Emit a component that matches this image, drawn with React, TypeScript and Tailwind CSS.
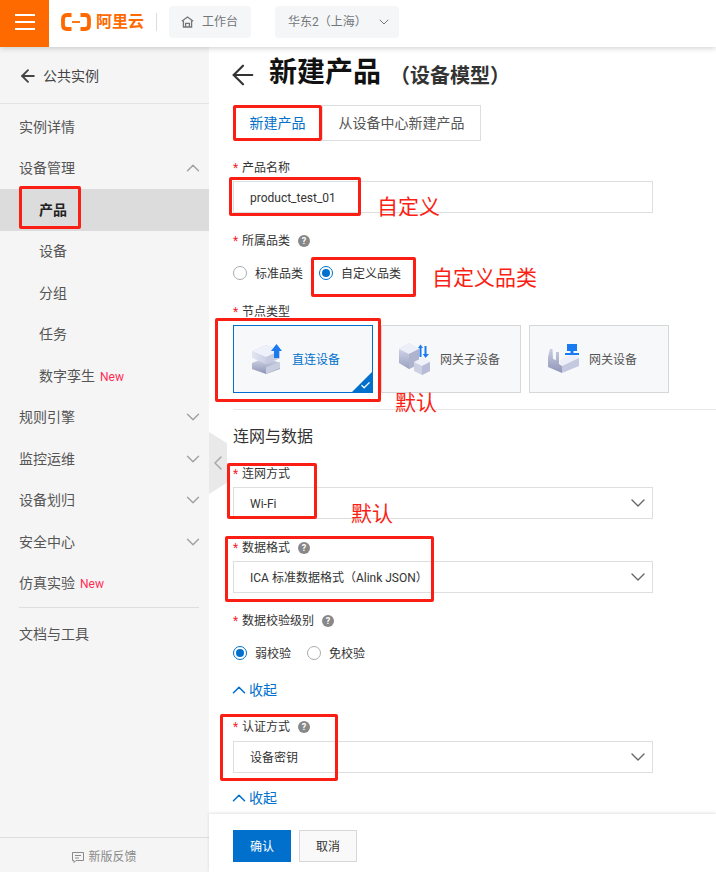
import React from 'react';
import { ArrowLeft, ChevronDown, ChevronLeft, ChevronUp, Check } from 'lucide-react';

const font = 'font-["Roboto","Noto_Sans_CJK_SC","Noto_Sans",sans-serif]';

const navItems = [
  { label: '实例详情', level: 0 },
  { label: '设备管理', level: 0, chevron: 'up' },
  { label: '产品', level: 1, active: true },
  { label: '设备', level: 1 },
  { label: '分组', level: 1 },
  { label: '任务', level: 1 },
  { label: '数字孪生', level: 1, isNew: true },
  { label: '规则引擎', level: 0, chevron: 'down' },
  { label: '监控运维', level: 0, chevron: 'down' },
  { label: '设备划归', level: 0, chevron: 'down' },
  { label: '安全中心', level: 0, chevron: 'down' },
  { label: '仿真实验', level: 0, isNew: true },
];

function Logo() {
  return (
    <svg width="30" height="18" viewBox="0 0 30 18" fill="none" stroke="#ff6a00" strokeWidth="3.8">
      <path d="M10.5 2H6Q2 2 2 6V12Q2 16 6 16H10.5" />
      <path d="M19.5 2H24Q28 2 28 6V12Q28 16 24 16H19.5" />
      <path d="M11 9H19" strokeWidth="1.8" />
    </svg>
  );
}

function HomeIcon() {
  return (
    <svg width="13" height="12" viewBox="0 0 13 12" fill="none" stroke="#73777a" strokeWidth="1.3">
      <path d="M0.8 5.2L6.5 1L12.2 5.2" />
      <path d="M2.4 4.6V11H10.6V4.6" />
      <path d="M4.6 11V7.4H8.4V11" />
    </svg>
  );
}

function Help() {
  return (
    <span className="flex h-3 w-3 items-center justify-center rounded-full bg-[#888888] text-[9px] leading-none font-bold text-white">
      ?
    </span>
  );
}

function Label({ text, help, className }: { text: string; help?: boolean; className: string }) {
  return (
    <div className={`flex h-4 items-center pt-[2px] text-xs leading-4 text-[#333333] ${className}`}>
      <span className="w-[9px] text-[#f5222d]">*</span>
      <span>{text}</span>
      {help && <span className="ml-2"><Help /></span>}
    </div>
  );
}

function Select({ value, className }: { value: string; className: string }) {
  return (
    <div className={`flex h-8 w-[420px] items-center justify-between border border-[#dcdee0] pr-[2px] pl-4 text-xs text-[#333333] ${className}`}>
      <span className="translate-y-px">{value}</span>
      <ChevronDown size={24} strokeWidth={1.4} className="text-[#666666]" />
    </div>
  );
}

function Radio({ label, checked }: { label: string; checked?: boolean }) {
  return (
    <div className="flex items-center gap-2 text-xs text-[#333333]">
      <span className={`flex h-3.5 w-3.5 items-center justify-center rounded-full border bg-white ${checked ? 'border-[#0070cc]' : 'border-[#a8acb0]'}`}>
        {checked && <span className="h-2 w-2 rounded-full bg-[#0070cc]" />}
      </span>
      <span className="translate-y-px">{label}</span>
    </div>
  );
}

function Collapse({ className }: { className: string }) {
  return (
    <div className={`flex h-4 items-center text-sm text-[#0070cc] ${className}`}>
      <ChevronUp size={22} strokeWidth={1.7} className="-mr-[1px] -ml-[5px]" />
      收起
    </div>
  );
}

function DirectIcon() {
  return (
    <svg width="30" height="30" viewBox="0 0 30 30" className="shrink-0">
      <defs>
        <linearGradient id="d1" x1="0" y1="0" x2="0" y2="1">
          <stop offset="0" stopColor="#d9dcec" />
          <stop offset="1" stopColor="#8d94b5" />
        </linearGradient>
        <linearGradient id="d2" x1="0" y1="0" x2="1" y2="0">
          <stop offset="0" stopColor="#e2e5f2" />
          <stop offset="1" stopColor="#b6bbd4" />
        </linearGradient>
      </defs>
      <path d="M0 19L14 13L28 19V25L14 30L0 25Z" fill="url(#d1)" />
      <path d="M14 23L28 18V24L14 30Z" fill="#c9cde0" />
      <path d="M0 7L14 1L28 7V14L14 20L0 14Z" fill="url(#d2)" />
      <path d="M0 7L14 1L28 7L14 13Z" fill="#eef0fa" />
      <path d="M14 13L28 7V14L14 20Z" fill="#c7cbe0" />
      <path d="M24.5 0L30 7H27V14H22V7H19Z" fill="#1a7af0" />
    </svg>
  );
}

function SubDeviceIcon() {
  return (
    <svg width="32" height="32" viewBox="0 0 32 32" className="shrink-0">
      <defs>
        <linearGradient id="s1" x1="0" y1="0" x2="0" y2="1">
          <stop offset="0" stopColor="#dfe2f2" />
          <stop offset="1" stopColor="#9aa0c0" />
        </linearGradient>
      </defs>
      <path d="M0 6L10 0L20 6V21L10 26L0 20Z" fill="url(#s1)" />
      <path d="M0 6L10 0L20 6L10 11Z" fill="#eceef8" />
      <path d="M10 11L20 6V21L10 26Z" fill="#aeb3ce" />
      <path d="M15 19L23 15L31 19V28L23 32L15 28Z" fill="#cdd1e4" />
      <path d="M15 19L23 15L31 19L23 23Z" fill="#f0f2fa" />
      <path d="M23 23L31 19V28L23 32Z" fill="#b8bcd6" />
      <path d="M19 5L21.5 1.5L24 5H22.5V14H20.5V5ZM25.5 3H27.5V11H30L26.5 15L23.8 11H25.5Z" fill="#1a7af0" />
    </svg>
  );
}

function GatewayIcon() {
  return (
    <svg width="32" height="30" viewBox="0 0 32 30" className="shrink-0">
      <defs>
        <linearGradient id="g1" x1="0" y1="0" x2="0" y2="1">
          <stop offset="0" stopColor="#c9cde2" />
          <stop offset="1" stopColor="#8f95b6" />
        </linearGradient>
      </defs>
      <path d="M2 5H4.5L5 15L8 16V8H11V20L14 22V29L0 23V13Z" fill="url(#g1)" />
      <path d="M11 17L25 9L31 14L14 22Z" fill="#eceef8" />
      <path d="M14 22L31 14V22L14 29Z" fill="#c5c9e0" />
      <path d="M19 0H29V7H25.5V9H31V11H17V9H22.5V7H19Z" fill="#1a7af0" />
    </svg>
  );
}

function NodeCard({ label, icon, gap, pad, selected }: { label: string; icon: React.ReactNode; gap: string; pad: string; selected?: boolean }) {
  return (
    <div className={`relative flex h-[68px] w-[140px] items-center overflow-hidden border bg-[#f7f8fa] text-xs ${selected ? 'border-[#0070cc] text-[#0070cc]' : 'border-[#d5d7d9] text-[#555555]'} ${gap} ${pad}`}>
      {icon}
      <span className="translate-y-px">{label}</span>
      {selected && (
        <span className="absolute right-0 bottom-0 h-5 w-5 bg-[#0070cc] [clip-path:polygon(100%_0,100%_100%,0_100%)]">
          <Check size={11} strokeWidth={2.6} className="absolute right-[1px] bottom-[1px] text-white" />
        </span>
      )}
    </div>
  );
}

function Sidebar() {
  return (
    <aside className="flex w-[209px] shrink-0 flex-col bg-[#f5f5f5]">
      <div className="flex h-[57px] shrink-0 items-center gap-[5px] border-b border-[#e3e3e3] pt-[1px] pl-[18px] text-sm text-[#444444]">
        <ArrowLeft size={20} strokeWidth={2.2} />
        公共实例
      </div>
      <div className="flex-1 pt-[2px]">
        {navItems.map((item) => (
          <div
            key={item.label}
            className={`flex h-[41.5px] items-center justify-between pr-[5px] text-sm ${item.level ? 'pl-[39px]' : 'pl-[19px]'} ${item.active ? 'bg-[#dcdcdc] font-bold text-[#222222]' : 'text-[#555555]'}`}
          >
            <span className="flex items-center gap-[5px]">
              {item.label}
              {item.isNew && <span className="translate-y-px text-xs text-[#ff2d55]">New</span>}
            </span>
            {item.chevron === 'up' && <ChevronUp size={22} strokeWidth={1.5} className="text-[#a0a0a0]" />}
            {item.chevron === 'down' && <ChevronDown size={22} strokeWidth={1.5} className="text-[#a0a0a0]" />}
          </div>
        ))}
        <div className="mx-[19px] mt-[3px] mr-[10px] border-t border-[#dedede]" />
        <div className="flex h-[52px] items-center pl-[19px] text-sm text-[#555555]">文档与工具</div>
      </div>
      <div className="flex h-[35px] shrink-0 items-center justify-center gap-1 border-t border-[#dedede] pt-1 text-xs text-[#8a8a8a]">
        <svg width="12" height="11" viewBox="0 0 12 11" fill="none" stroke="#8a8a8a">
          <path d="M0.5 0.5H11.5V8.5H4L2 10.5V8.5H0.5Z" />
          <path d="M3 3.5H9M3 6H7" />
        </svg>
        新版反馈
      </div>
    </aside>
  );
}

function Header() {
  return (
    <header className="relative z-10 flex h-[47px] shrink-0 items-center bg-white pr-4 pb-[3px] shadow-[0_1px_6px_rgba(0,0,0,0.2)]">
      <div className="-mb-[3px] flex h-[47px] w-[49px] flex-col items-center justify-center gap-[5px] bg-[#ff6a00] pb-[3px]">
        <span className="h-[2px] w-5 bg-white" />
        <span className="h-[2px] w-5 bg-white" />
        <span className="h-[2px] w-5 bg-white" />
      </div>
      <div className="ml-3 flex items-center gap-[5px]">
        <Logo />
        <span className="text-base leading-none font-bold text-[#ff6a00]">阿里云</span>
      </div>
      <div className="mr-3 ml-3 h-[18px] w-px bg-[#dcdcdc]" />
      <div className="flex h-8 w-[82px] items-center gap-2 rounded-sm bg-[#f5f6f7] pl-3 text-xs text-[#73777a]">
        <HomeIcon />
        工作台
      </div>
      <div className="ml-6 flex h-8 w-[124px] items-center gap-[9px] rounded-sm bg-[#f5f6f7] pl-[13px] text-xs text-[#73777a]">
        华东2（上海）
        <ChevronDown size={16} strokeWidth={1.5} />
      </div>
    </header>
  );
}

function Annotations() {
  const boxes = [
    'left-[19px] top-[186px] h-[43px] w-[62px]',
    'left-[233px] top-[105px] h-[36px] w-[89px]',
    'left-[229px] top-[177px] h-[39px] w-[132px]',
    'left-[311px] top-[257px] h-[40px] w-[105px]',
    'left-[215px] top-[318px] h-[84px] w-[166px]',
    'left-[227px] top-[463px] h-[56px] w-[90px]',
    'left-[225px] top-[536px] h-[66px] w-[209px]',
    'left-[220px] top-[714px] h-[67px] w-[118px]',
  ];
  return (
    <>
      {boxes.map((box) => (
        <div key={box} className={`absolute rounded-[2px] border-[3px] border-[#fb1e14] ${box}`} />
      ))}
      <span className="absolute top-[192px] left-[377px] text-[21px] leading-[30px] text-[#fb1e14]">自定义</span>
      <span className="absolute top-[263px] left-[432px] text-[21px] leading-[30px] text-[#fb1e14]">自定义品类</span>
      <span className="absolute top-[388px] left-[395px] text-[21px] leading-[30px] text-[#fb1e14]">默认</span>
      <span className="absolute top-[499px] left-[351px] text-[21px] leading-[30px] text-[#fb1e14]">默认</span>
    </>
  );
}

function Form() {
  return (
    <main className="relative flex min-w-0 flex-1 flex-col bg-white">
      <div className="flex-1 overflow-hidden pt-2 pl-6">
        <div className="flex h-9 items-center">
          <ArrowLeft size={32} strokeWidth={1.6} className="-ml-[6px] shrink-0 translate-y-[2px] text-[#333333]" />
          <h1 className="ml-[10px] text-[28px] leading-9 font-bold text-[#111111]">新建产品</h1>
          <span className="ml-[9px] translate-y-[3px] text-xl leading-9 font-bold text-[#333333]">（设备模型）</span>
        </div>

        <div className="mt-[14px] flex h-9 text-sm">
          <div className="flex w-[89px] items-center justify-center text-[#0070cc]">新建产品</div>
          <div className="flex w-[159px] items-center justify-center border border-[#dcdee0] text-[#555555]">从设备中心新建产品</div>
        </div>

        <Label text="产品名称" className="mt-[18px]" />
        <div className="mt-1.5 flex h-8 w-[420px] items-center border border-[#dcdee0] pt-[2px] pl-4 text-xs text-[#333333]">product_test_01</div>

        <Label text="所属品类" help className="mt-[19px]" />
        <div className="mt-[17px] flex h-4 items-center gap-4">
          <Radio label="标准品类" />
          <Radio label="自定义品类" checked />
        </div>

        <Label text="节点类型" className="mt-[22px]" />
        <div className="mt-1.5 flex gap-2">
          <NodeCard label="直连设备" icon={<DirectIcon />} gap="gap-[10px]" pad="pl-[18px]" selected />
          <NodeCard label="网关子设备" icon={<SubDeviceIcon />} gap="gap-[9px]" pad="pl-[17px]" />
          <NodeCard label="网关设备" icon={<GatewayIcon />} gap="gap-[9px]" pad="pl-[18px]" />
        </div>

        <div className="mt-4 border-t border-[#e8e8e8]" />
        <h2 className="mt-[17px] h-5 text-base leading-5 text-[#333333]">连网与数据</h2>

        <Label text="连网方式" className="mt-[18px]" />
        <Select value="Wi-Fi" className="mt-1.5" />

        <Label text="数据格式" help className="mt-5" />
        <Select value="ICA 标准数据格式（Alink JSON）" className="mt-1.5" />

        <Label text="数据校验级别" help className="mt-[19px]" />
        <div className="mt-[17px] flex h-4 items-center gap-4">
          <Radio label="弱校验" checked />
          <Radio label="免校验" />
        </div>

        <Collapse className="mt-[21px]" />

        <Label text="认证方式" help className="mt-5" />
        <Select value="设备密钥" className="mt-[7px]" />

        <Collapse className="mt-[17px]" />
      </div>

      <div className="z-10 flex h-[58px] shrink-0 gap-2 bg-white pt-4 pl-6 shadow-[0_-1px_3px_rgba(0,0,0,0.12)]">
        <button className="h-8 w-[58px] bg-[#0070cc] pt-[2px] text-xs text-white">确认</button>
        <button className="h-8 w-[58px] border border-[#d5d7d9] bg-[#f9f9f9] pt-[2px] text-xs text-[#333333]">取消</button>
      </div>
    </main>
  );
}

export default function App() {
  return (
    <div className={`relative flex h-[872px] w-[716px] flex-col overflow-hidden bg-white ${font}`}>
      <Header />
      <div className="flex min-h-0 flex-1">
        <Sidebar />
        <Form />
      </div>
      {/* sidebar collapse handle */}
      <div className="absolute top-[432px] left-[209px] flex h-[62px] w-[18px] items-center justify-center bg-[#e9e9e9] [clip-path:polygon(0_0,100%_18%,100%_82%,0_100%)]">
        <ChevronLeft size={24} strokeWidth={1.5} className="shrink-0 text-[#a8a8a8]" />
      </div>
      <Annotations />
    </div>
  );
}
